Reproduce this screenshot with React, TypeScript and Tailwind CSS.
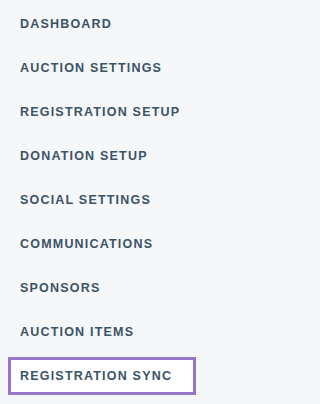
const items = [
  "DASHBOARD",
  "AUCTION SETTINGS",
  "REGISTRATION SETUP",
  "DONATION SETUP",
  "SOCIAL SETTINGS",
  "COMMUNICATIONS",
  "SPONSORS",
  "AUCTION ITEMS",
  "REGISTRATION SYNC",
];

export default function App() {
  const active = "REGISTRATION SYNC";
  return (
    <div className="min-h-screen w-full bg-[#f5f7f9]">
      <nav className="w-[204px] px-2 pt-[2px] font-['Liberation_Sans',Arial,sans-serif]">
        <ul className="flex flex-col">
          {items.map((label) => (
            <li key={label} className="py-[3px]">
              <div
                className={
                  label === active
                    ? "flex h-[38px] items-center border-[3px] border-[#9676c9] bg-white pl-[9px]"
                    : "flex h-[38px] items-center border-[3px] border-transparent pl-[9px]"
                }
              >
                <span className="text-[12.5px] font-bold leading-none tracking-[1.2px] text-[#3b5366]">
                  {label}
                </span>
              </div>
            </li>
          ))}
        </ul>
      </nav>
    </div>
  );
}
